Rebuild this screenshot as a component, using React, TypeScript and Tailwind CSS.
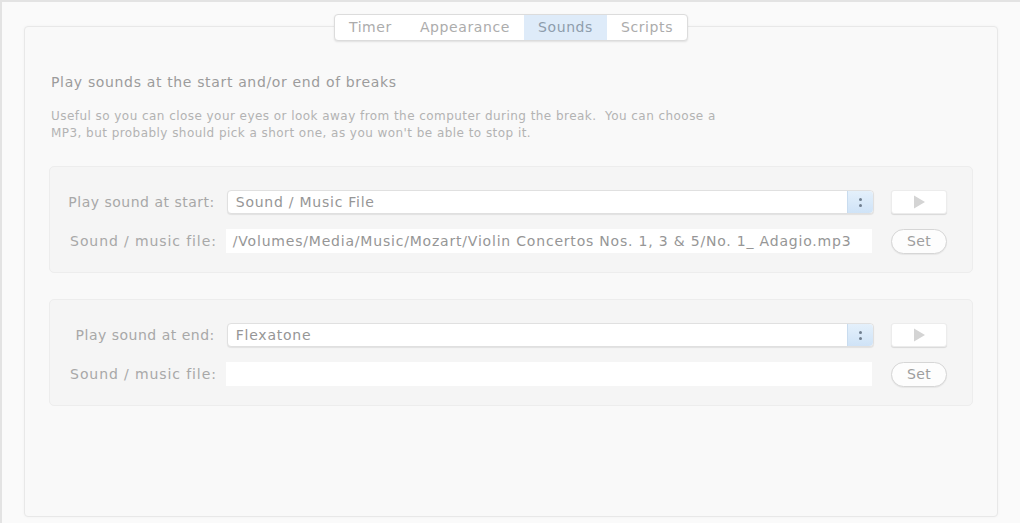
const tabs = ["Timer", "Appearance", "Sounds", "Scripts"];

function Stepper() {
  return (
    <div className="w-[26px] h-full rounded-r-[4px] bg-gradient-to-b from-[#e4f0fb] to-[#cfe3f7] border-l border-[#c9dcef] flex flex-col items-center justify-center gap-[3px]">
      <span className="w-[3px] h-[3px] rounded-full bg-[#707f8f]" />
      <span className="w-[3px] h-[3px] rounded-full bg-[#707f8f]" />
    </div>
  );
}

function PlayButton() {
  return (
    <button className="w-[56px] h-[24px] rounded-[3px] bg-white border border-[#ececec] shadow-[0_1px_1px_rgba(0,0,0,0.12)] flex items-center justify-center">
      <svg width="16" height="16" viewBox="0 0 16 16">
        <path d="M3 1.5 L14 8 L3 14.5 Z" fill="#d4d4d4" />
      </svg>
    </button>
  );
}

function SetButton() {
  return (
    <button className="w-[56px] h-[25px] rounded-full bg-[#fdfdfd] border border-[#d6d6d6] shadow-[0_1px_1px_rgba(0,0,0,0.06)] text-[14px] tracking-[0.4px] text-[#9e9e9e] flex items-center justify-center">
      Set
    </button>
  );
}

function SoundGroup({ label, choice, file }: { label: string; choice: string; file: string }) {
  return (
    <div className="rounded-[5px] border border-[#ededed] bg-[#f5f5f5] pt-[23px] pb-[19px] pr-[25px] flex flex-col gap-[15px]">
      <div className="flex items-center h-[24px]">
        <div className="w-[167px] text-right text-[14px] tracking-[0.5px] text-[#a8a8a8] pr-[2px] whitespace-nowrap">
          {label}
        </div>
        <div className="ml-[10px] w-[648px] h-[24px] rounded-[4px] bg-white border border-[#e0e0e0] shadow-[0_1px_1px_rgba(0,0,0,0.08)] flex items-center">
          <span className="flex-1 pl-[8px] text-[14px] tracking-[0.75px] text-[#969696]">{choice}</span>
          <Stepper />
        </div>
        <div className="ml-[17px]">
          <PlayButton />
        </div>
      </div>
      <div className="flex items-center h-[24px]">
        <div className="w-[167px] text-right text-[14px] tracking-[0.9px] text-[#a8a8a8] whitespace-nowrap">
          Sound / music file:
        </div>
        <div className="ml-[9px] w-[647px] h-[24px] bg-white flex items-center pl-[7px] text-[14px] tracking-[0.8px] text-[#969696] whitespace-nowrap overflow-hidden">
          {file}
        </div>
        <div className="ml-[19px]">
          <SetButton />
        </div>
      </div>
    </div>
  );
}

export default function App() {
  return (
    <div className="w-[1020px] h-[523px] overflow-hidden bg-[#fafafa] border-t-2 border-l-2 border-[#e3e3e3] font-['DejaVu_Sans',sans-serif] pt-[24px] pl-[22px] pr-[22px]">
      <div className="h-[491px] rounded-[4px] border border-[#e8e8e8] bg-[#f9f9f9] shadow-[0_0_3px_rgba(0,0,0,0.04)]">
        {/* tabs */}
        <div className="-mt-[13px] flex justify-center">
          <div className="h-[27px] flex rounded-[4px] bg-white border border-[#dcdcdc] shadow-[0_1px_2px_rgba(0,0,0,0.1)] overflow-hidden text-[14px] tracking-[0.6px] text-[#acacac]">
            {tabs.map((t) => (
              <div
                key={t}
                className={
                  t === "Sounds"
                    ? "px-[14px] flex items-center bg-[#deebf9] text-[#8e9dac]"
                    : "px-[14px] flex items-center"
                }
              >
                {t}
              </div>
            ))}
          </div>
        </div>

        <div className="px-[24px]">
          <h1 className="mt-[32px] ml-[2px] text-[14px] tracking-[0.65px] text-[#9c9c9c] leading-[18px]">
            Play sounds at the start and/or end of breaks
          </h1>
          <p className="mt-[17px] ml-[2px] text-[12px] tracking-[0.45px] leading-[17px] text-[#b3b3b3] w-[720px] whitespace-nowrap">
            Useful so you can close your eyes or look away from the computer during the break.&nbsp; You can choose a
            <br />
            MP3, but probably should pick a short one, as you won't be able to stop it.
          </p>

          <div className="mt-[24px] flex flex-col gap-[26px]">
            <SoundGroup
              label="Play sound at start:"
              choice="Sound / Music File"
              file="/Volumes/Media/Music/Mozart/Violin Concertos Nos. 1, 3 & 5/No. 1_ Adagio.mp3"
            />
            <SoundGroup label="Play sound at end:" choice="Flexatone" file="" />
          </div>
        </div>
      </div>
    </div>
  );
}
